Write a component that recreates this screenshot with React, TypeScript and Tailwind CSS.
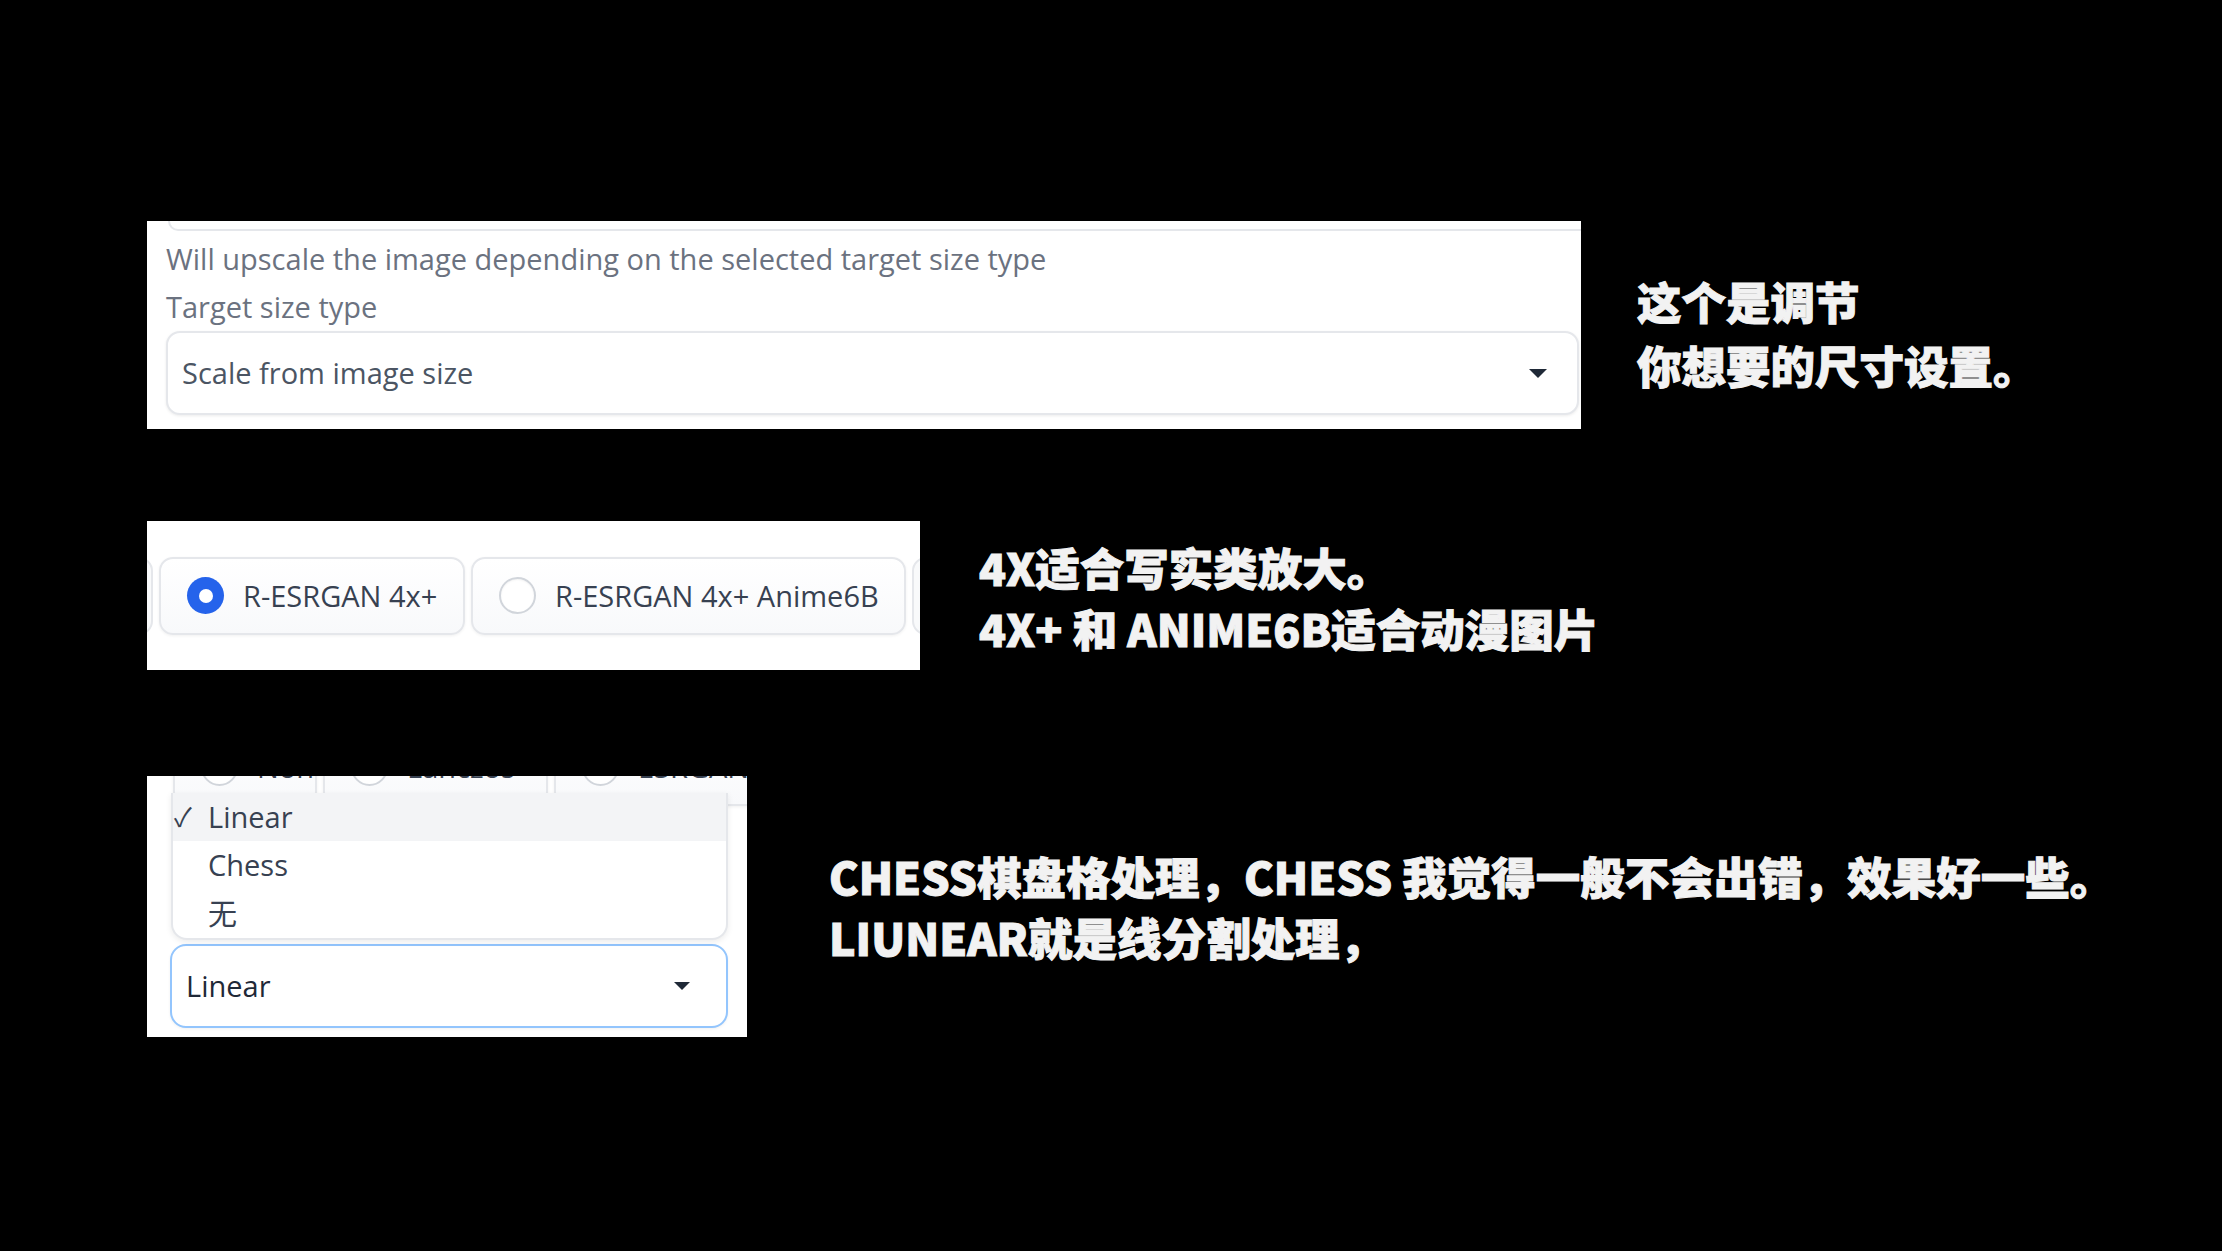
import React from 'react';

const ui = { fontFamily: "'Open Sans', 'Noto Sans CJK SC', sans-serif" };
const cjk = { fontFamily: "'Noto Sans CJK SC', 'Noto Sans', sans-serif" };

const Caret: React.FC<{ className?: string }> = ({ className }) => (
  <svg viewBox="0 0 18 9" className={className}>
    <path d="M0 0 H18 L9 9 Z" fill="#1f2937" />
  </svg>
);

const Radio: React.FC<{ checked?: boolean }> = ({ checked }) =>
  checked ? (
    <span className="flex h-[37px] w-[37px] shrink-0 items-center justify-center rounded-full bg-[#2563eb]">
      <span className="h-[14px] w-[14px] rounded-full bg-white" />
    </span>
  ) : (
    <span className="h-[37px] w-[37px] shrink-0 rounded-full border-2 border-[#d1d5db] bg-white shadow-[inset_0_1px_2px_rgba(0,0,0,0.05)]" />
  );

const RadioItem: React.FC<{ label: string; checked?: boolean; className?: string }> = ({ label, checked, className }) => (
  <div
    className={
      'flex h-[78px] shrink-0 items-center gap-[19px] overflow-hidden whitespace-nowrap rounded-[14px] border-2 border-[#e5e7eb] bg-gradient-to-b from-white to-[#f8f9fb] pl-[26px] text-[29px] text-[#374151] shadow-[0_1px_3px_rgba(0,0,0,0.06)] ' +
      (className ?? '')
    }
  >
    <Radio checked={checked} />
    <span>{label}</span>
  </div>
);

const Note: React.FC<{ lines: string[]; className?: string }> = ({ lines, className }) => (
  <div
    style={cjk}
    className={
      'whitespace-nowrap text-[44.5px] font-black text-[#f2f2f2] [-webkit-text-stroke:1px_#f2f2f2] ' + (className ?? '')
    }
  >
    {lines.map((l, i) => (
      <div key={i}>{l}</div>
    ))}
  </div>
);

export default function App() {
  return (
    <div style={ui} className="h-[1251px] w-[2222px] overflow-hidden bg-black pl-[147px] pt-[221px]">
      {/* target size */}
      <div className="flex items-start">
        <div className="flex h-[208px] w-[1434px] shrink-0 flex-col overflow-hidden bg-white">
          <div className="-mr-[20px] ml-[21px] h-[10px] shrink-0 rounded-b-[14px] border-x-2 border-b-2 border-[#e5e7eb]" />
          <div className="ml-[19px] mt-[6px] h-[44px] whitespace-nowrap text-[29px] leading-[44px] text-[#6b7280]">
            Will upscale the image depending on the selected target size type
          </div>
          <div className="ml-[19px] mt-[6px] h-[40px] text-[29px] leading-[40px] text-[#6b7280]">Target size type</div>
          <div className="ml-[19px] mt-[4px] flex h-[84px] w-[1413px] shrink-0 items-center justify-between rounded-[14px] border-2 border-[#e5e7eb] bg-white pl-[14px] pr-[30px] shadow-[0_1px_3px_rgba(0,0,0,0.08)]">
            <span className="text-[29px] text-[#4b5563]">Scale from image size</span>
            <Caret className="h-[9px] w-[18px]" />
          </div>
        </div>
        <Note className="ml-[56px] mt-[48px] leading-[64px]" lines={['这个是调节', '你想要的尺寸设置。']} />
      </div>

      {/* upscaler radios */}
      <div className="mt-[92px] flex items-start">
        <div className="flex h-[149px] w-[773px] shrink-0 items-center gap-[6px] overflow-hidden bg-white">
          <div className="-ml-[54px] h-[78px] w-[60px] shrink-0 rounded-[14px] border-2 border-[#e5e7eb] bg-[#f9fafb]" />
          <RadioItem checked label="R-ESRGAN 4x+" className="w-[306px]" />
          <RadioItem label="R-ESRGAN 4x+ Anime6B" className="w-[435px]" />
          <div className="h-[78px] w-[60px] shrink-0 rounded-[14px] border-2 border-[#e5e7eb] bg-[#f9fafb]" />
        </div>
        <Note className="ml-[59px] mt-[15px] leading-[61px]" lines={['4X适合写实类放大。', '4X+ 和 ANIME6B适合动漫图片']} />
      </div>

      {/* tile mode */}
      <div className="mt-[106px] flex items-start">
        <div className="relative h-[261px] w-[600px] shrink-0 overflow-hidden bg-white">
          <div className="-mt-[48px] ml-[26px] flex gap-[6px]">
            <RadioItem label="None" className="w-[144px]" />
            <RadioItem label="Lanczos" className="w-[225px]" />
            <RadioItem label="ESRGAN_4x" className="w-[260px]" />
          </div>
          <div className="ml-[23px] mt-[138px] flex h-[84px] w-[558px] items-center justify-between rounded-[16px] border-2 border-[#93c5fd] bg-white pl-[14px] pr-[36px] shadow-[0_1px_3px_rgba(0,0,0,0.06)]">
            <span className="text-[29px] text-[#1f2937]">Linear</span>
            <Caret className="h-[8px] w-[16px]" />
          </div>
          <div className="absolute left-[24px] top-[17px] w-[557px] overflow-hidden rounded-b-[16px] border-x-2 border-b-2 border-[#e5e7eb] bg-white text-[29px] text-[#374151] shadow-[0_2px_6px_rgba(0,0,0,0.08)]">
            <div className="relative flex h-[48px] items-center bg-[#f3f4f6] pl-[35px]">
              <span className="absolute left-[1px] text-[26px] text-[#374151]">✓</span>
              Linear
            </div>
            <div className="flex h-[48px] items-center pl-[35px]">Chess</div>
            <div className="flex h-[49px] items-center pl-[35px]">无</div>
          </div>
        </div>
        <Note
          className="ml-[82px] mt-[69px] leading-[61px]"
          lines={['CHESS棋盘格处理，CHESS 我觉得一般不会出错，效果好一些。', 'LIUNEAR就是线分割处理，']}
        />
      </div>
    </div>
  );
}
